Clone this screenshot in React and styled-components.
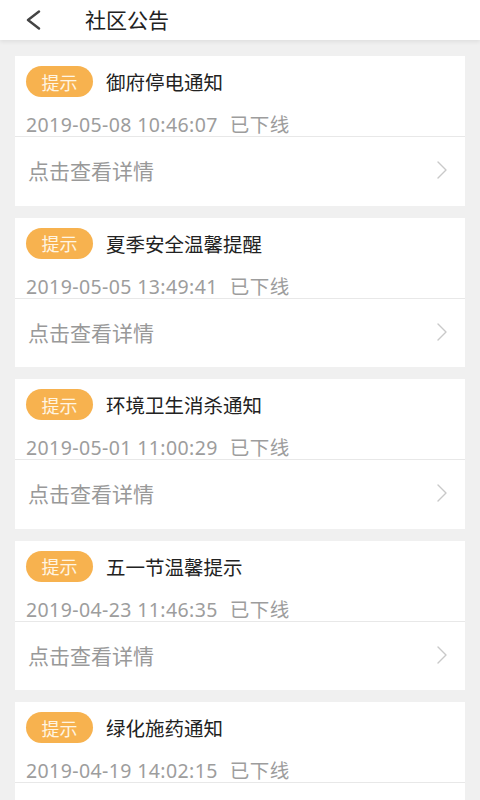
import React from "react";
import styled, { createGlobalStyle } from "styled-components";

const GlobalStyle = createGlobalStyle`
  html, body {
    margin: 0;
    padding: 0;
    background: #f0f0f0;
    font-family: "Noto Sans", "Noto Sans CJK SC", sans-serif;
  }
  * {
    box-sizing: border-box;
  }
`;

const Page = styled.div`
  width: 480px;
  min-height: 800px;
  background: #f0f0f0;
`;

const Header = styled.div`
  height: 40px;
  background: #fff;
  display: flex;
  align-items: center;
  padding-left: 25px;
  box-shadow: 0 2px 4px rgba(0, 0, 0, 0.07);
  position: relative;
  z-index: 1;
`;

const BackIcon = styled.svg`
  width: 16px;
  height: 20px;
  margin-right: 44px;
  flex-shrink: 0;
`;

const HeaderTitle = styled.h1`
  margin: 0;
  font-size: 21px;
  font-weight: 400;
  color: #222;
  line-height: 40px;
`;

const List = styled.div`
  display: flex;
  flex-direction: column;
  gap: 12px;
  padding: 16px 15px;
`;

const Card = styled.div`
  background: #fff;
  height: 149.5px;
  display: flex;
  flex-direction: column;
`;

const CardTop = styled.div`
  height: 81px;
  padding: 10px 11px 0;
  border-bottom: 1px solid #e8e8e8;
  overflow: hidden;
  display: flex;
  flex-direction: column;
`;

const HeadRow = styled.div`
  display: flex;
  align-items: center;
  height: 31px;
  gap: 13px;
`;

const Badge = styled.span`
  width: 67px;
  height: 31px;
  border-radius: 16px;
  background: #f7b24f;
  color: #fff5e3;
  font-size: 18px;
  display: flex;
  align-items: center;
  justify-content: center;
  flex-shrink: 0;
`;

const Title = styled.span`
  font-size: 19.5px;
  color: #222;
`;

const DateLine = styled.div`
  margin-top: 17px;
  font-size: 19.5px;
  letter-spacing: 0.4px;
  line-height: 22px;
  color: #9d9d9d;
  white-space: nowrap;
`;

const Status = styled.span`
  margin-left: 12px;
`;

const DetailRow = styled.div`
  flex: 1;
  display: flex;
  align-items: center;
  justify-content: space-between;
  padding: 0 18px 2px 13px;
`;

const DetailText = styled.span`
  font-size: 21px;
  color: #999;
`;

const Chevron = styled.svg`
  width: 10px;
  height: 18px;
`;

const notices = [
  { title: "御府停电通知", time: "2019-05-08 10:46:07" },
  { title: "夏季安全温馨提醒", time: "2019-05-05 13:49:41" },
  { title: "环境卫生消杀通知", time: "2019-05-01 11:00:29" },
  { title: "五一节温馨提示", time: "2019-04-23 11:46:35" },
  { title: "绿化施药通知", time: "2019-04-19 14:02:15" },
];

const NoticeCard = ({ title, time }) => (
  <Card>
    <CardTop>
      <HeadRow>
        <Badge>提示</Badge>
        <Title>{title}</Title>
      </HeadRow>
      <DateLine>
        {time}
        <Status>已下线</Status>
      </DateLine>
    </CardTop>
    <DetailRow>
      <DetailText>点击查看详情</DetailText>
      <Chevron viewBox="0 0 10 18" fill="none">
        <polyline
          points="1,1 9,9 1,17"
          stroke="#c9c9c9"
          strokeWidth="1.4"
          strokeLinecap="round"
          strokeLinejoin="round"
        />
      </Chevron>
    </DetailRow>
  </Card>
);

const App = () => {
  return (
    <Page>
      <GlobalStyle />
      <Header>
        <BackIcon viewBox="0 0 16 20" fill="none">
          <polyline
            points="14,1.5 3,10 14,18.5"
            stroke="#444"
            strokeWidth="2.4"
            strokeLinecap="round"
            strokeLinejoin="round"
          />
        </BackIcon>
        <HeaderTitle>社区公告</HeaderTitle>
      </Header>
      <List>
        {notices.map((n, i) => (
          <NoticeCard key={i} title={n.title} time={n.time} />
        ))}
      </List>
    </Page>
  );
};

export default App;
